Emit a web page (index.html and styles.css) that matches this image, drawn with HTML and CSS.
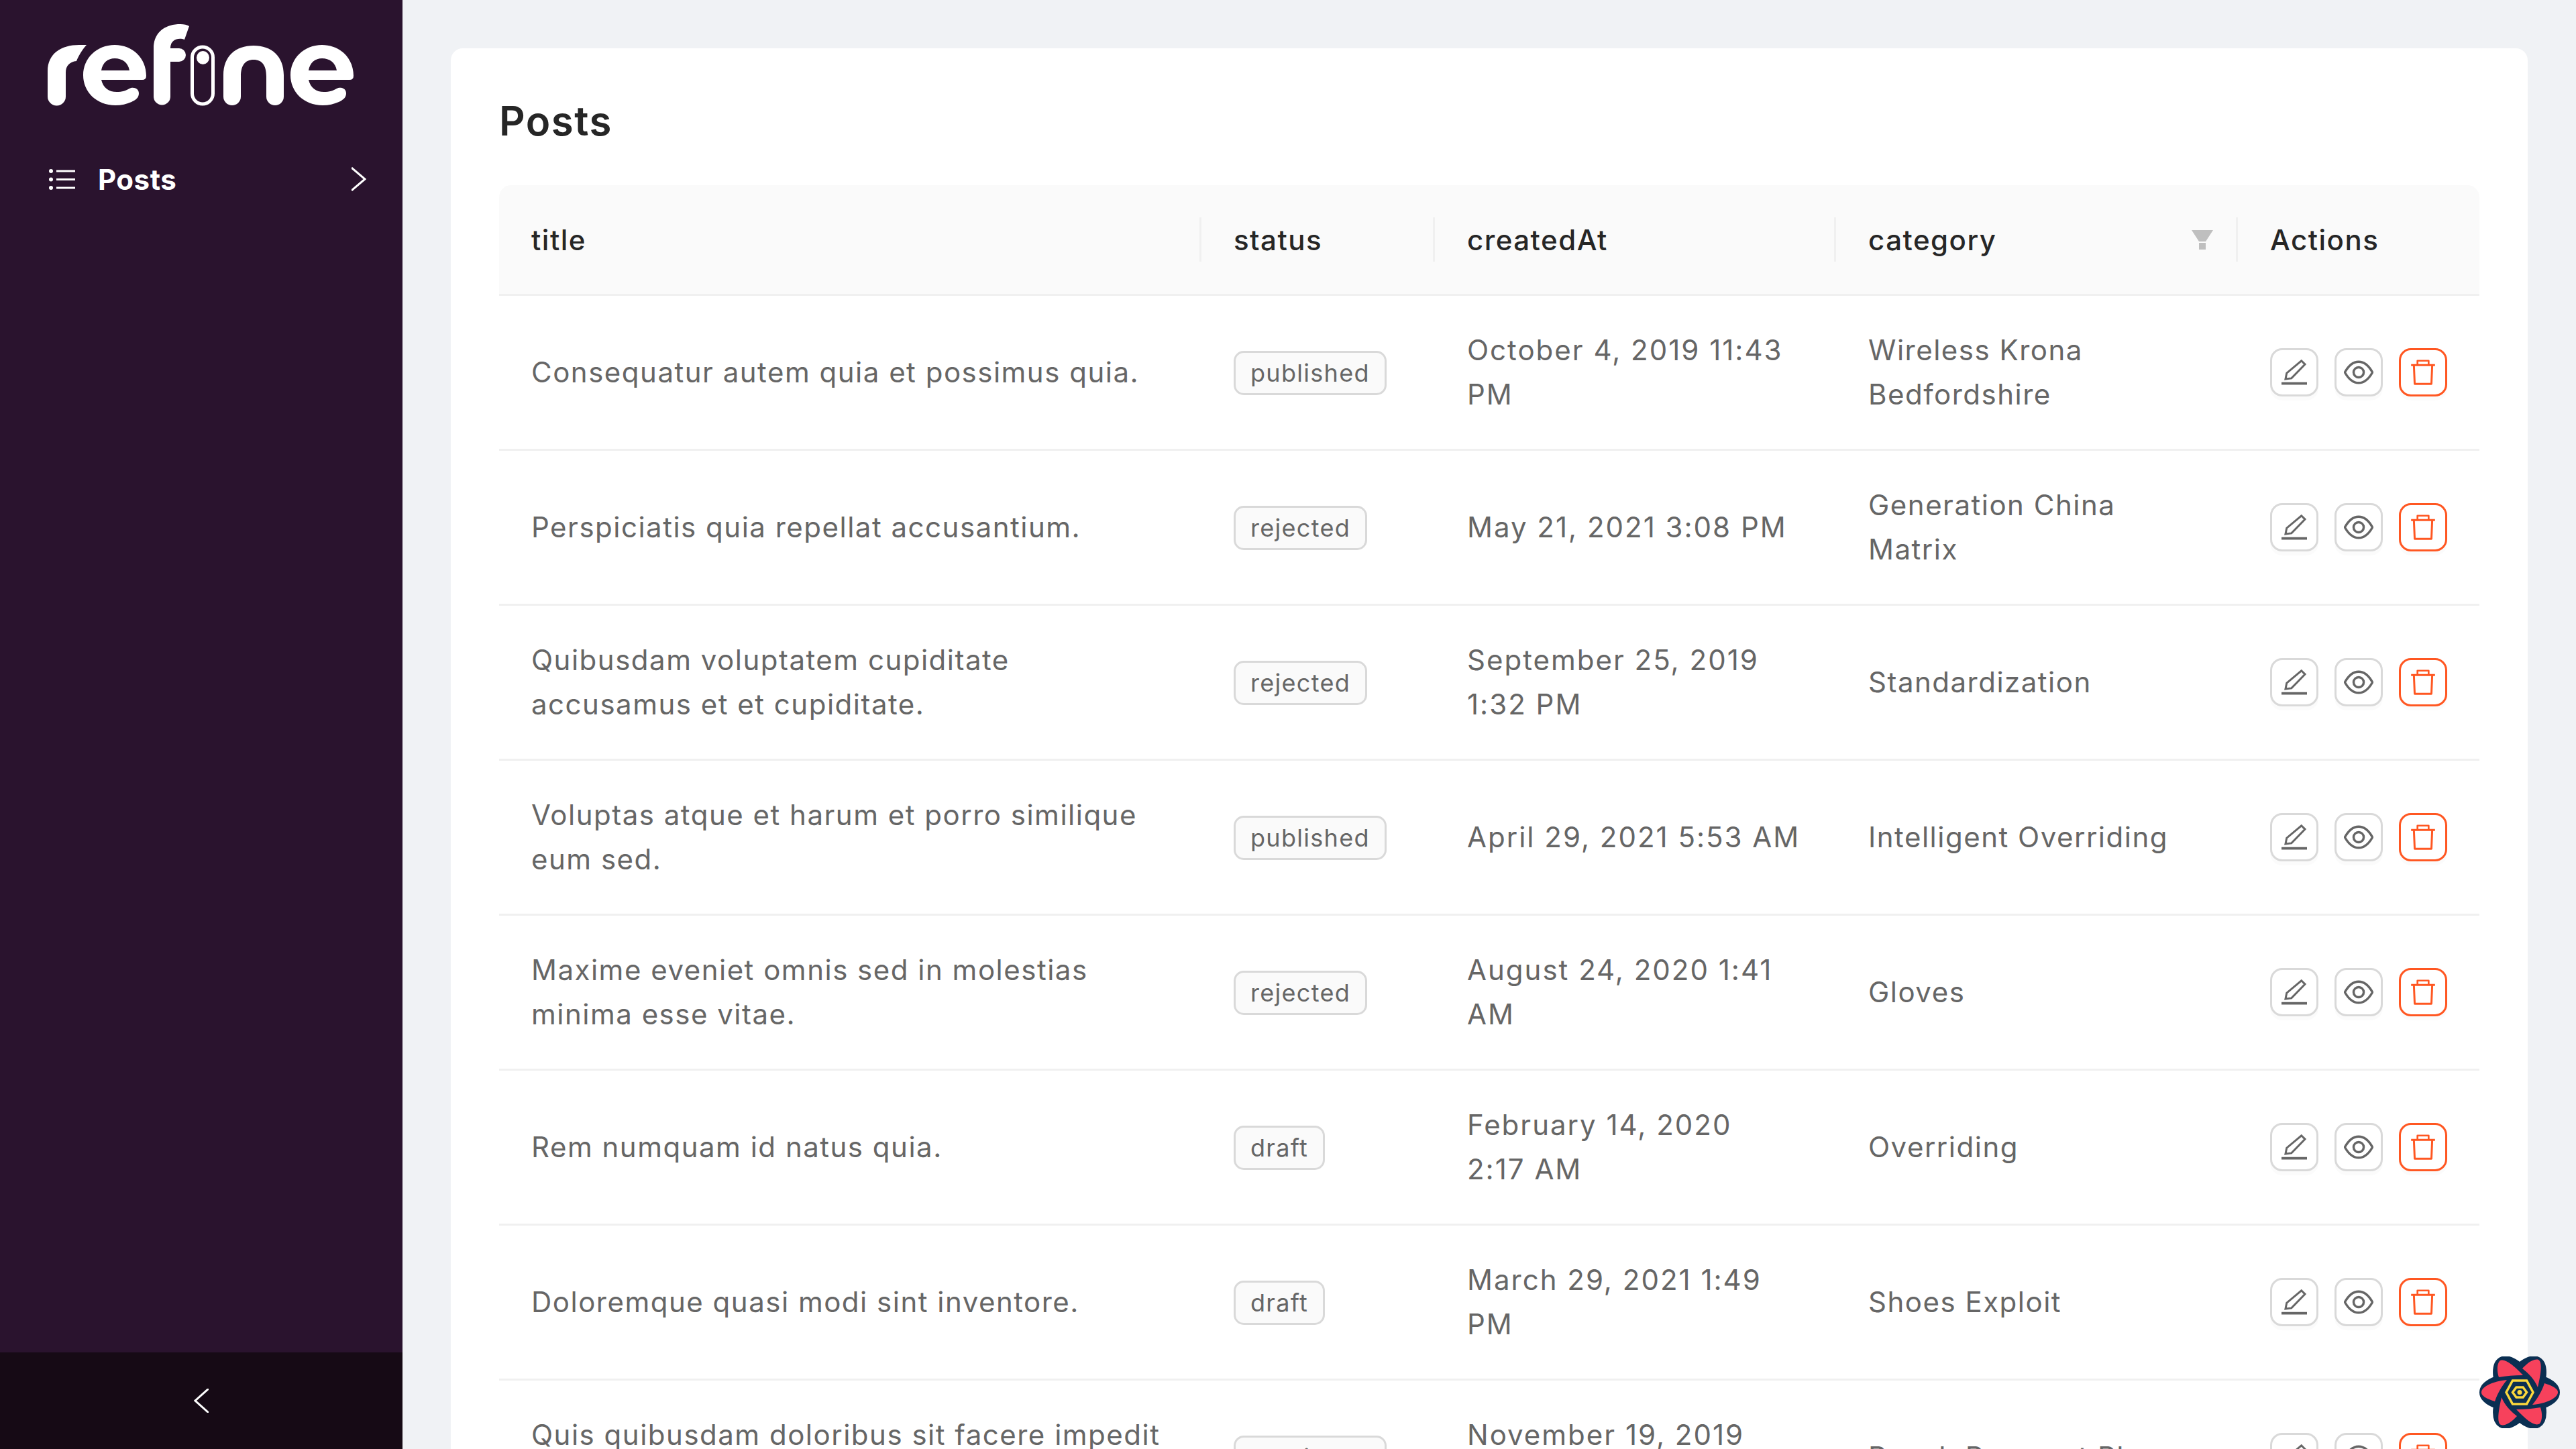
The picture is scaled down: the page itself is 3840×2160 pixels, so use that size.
FILE: index.html
```html
<!DOCTYPE html>
<html lang="en">
<head>
    <meta charset="UTF-8">
    <title>Posts</title>
    <link rel="stylesheet" href="styles.css">
</head>
<body>
    <svg class="icon-defs" width="0" height="0">
        <symbol id="i-edit" viewBox="0 0 64 64">
            <path d="M50 3 L59 12 L25 47 L10 49 L13 34 Z" fill="none" stroke="#666" stroke-width="5"/>
            <path d="M0 60 H64" fill="none" stroke="#666" stroke-width="6"/>
        </symbol>
        <symbol id="i-eye" viewBox="0 0 64 64">
            <path d="M2 32 C12 14 22 9 32 9 C42 9 52 14 62 32 C52 50 42 55 32 55 C22 55 12 50 2 32 Z" fill="none" stroke="#666" stroke-width="5"/>
            <circle cx="32" cy="32" r="11" fill="none" stroke="#666" stroke-width="5"/>
        </symbol>
        <symbol id="i-trash" viewBox="0 0 64 64">
            <path d="M2 14 H62" fill="none" stroke="#ff5722" stroke-width="5"/>
            <path d="M18 14 V3 H46 V14" fill="none" stroke="#ff5722" stroke-width="4.5" stroke-linejoin="round"/>
            <path d="M9 14 L11 61 H53 L55 14" fill="none" stroke="#ff5722" stroke-width="5" stroke-linejoin="round"/>
        </symbol>
        <symbol id="logo-e" viewBox="0 0 94 90">
            <path fill-rule="evenodd" d="M47 0 C74 0 94 20 94 46 Q94 52 88 52 H27 C30 64 38 70 50 70 C58 70 64 68 69 65 C74 62 83 64 83 72 C83 79 78 82 72 85 C65 88 57 90 48 90 C20 90 0 70 0 45 C0 20 20 0 47 0 Z M27 38 H69 C67 26 58 20 47 20 C37 20 29 26 27 38 Z" fill="#fff"/>
        </symbol>
    </svg>

    <div class="layout">
        <aside class="sider">
            <div class="sider-main">
                <div class="logo">
                    <svg viewBox="0 0 456 122" width="456" height="122">
                        <path d="M0 108 V70 C0 44 20 31 47 31 H58 C50 40 46 48 43 55 C33 56 27 62 27 72 V108 A13.5 13.5 0 0 1 0 108 Z" fill="#fff"/>
                        <use href="#logo-e" x="53" y="31" width="94" height="90"/>
                        <path d="M158 108 V36 C158 12 175 0 198 0 C203 0 208 1 211 3 L204 23 C196 20 183 22 183 36 H196 A10 10 0 0 1 196 56 H183 V108 A12.5 12.5 0 0 1 158 108 Z" fill="#fff"/>
                        <rect x="215.5" y="34" width="31" height="85" rx="15.5" fill="none" stroke="#fff" stroke-width="5"/>
                        <ellipse cx="231.5" cy="50" rx="9.5" ry="10" fill="#fff"/>
                        <path d="M262 108 V76 C262 48 280 32 307 32 C334 32 352 48 352 76 V108 A13 13 0 0 1 326 108 V78 C326 62 320 53 307 53 C294 53 288 62 288 78 V108 A13 13 0 0 1 262 108 Z" fill="#fff"/>
                        <use href="#logo-e" x="362" y="31" width="94" height="90"/>
                    </svg>
                </div>
                <div class="menu-item">
                    <svg class="menu-icon" viewBox="0 0 39 31" width="39" height="31">
                        <circle cx="3" cy="3" r="3" fill="#fff"/>
                        <circle cx="3" cy="15.5" r="3" fill="#fff"/>
                        <circle cx="3" cy="28" r="3" fill="#fff"/>
                        <path d="M11 3 H39 M11 15.5 H39 M11 28 H39" stroke="#fff" stroke-width="3"/>
                    </svg>
                    <span class="menu-label">Posts</span>
                    <svg class="menu-arrow" viewBox="0 0 22 36" width="22" height="36">
                        <path d="M0 1 L20 18 L0 35" fill="none" stroke="#fff" stroke-width="3"/>
                    </svg>
                </div>
            </div>
            <div class="sider-trigger">
                <svg viewBox="0 0 22 36" width="22" height="36">
                    <path d="M22 0 L2 18 L22 36" fill="none" stroke="#fff" stroke-width="3"/>
                </svg>
            </div>
        </aside>

        <main class="content">
            <div class="card">
                <h1 class="card-title">Posts</h1>
                <table class="posts-table">
                    <colgroup>
                        <col class="col-title">
                        <col class="col-status">
                        <col class="col-created">
                        <col class="col-category">
                        <col class="col-actions">
                    </colgroup>
                    <thead>
                        <tr>
                            <th>title</th>
                            <th>status</th>
                            <th>createdAt</th>
                            <th>
                                <div class="th-filter">
                                    <span>category</span>
                                    <svg viewBox="0 0 32 30" width="32" height="30">
                                        <path d="M0 1 H32 L21 18 H11 Z M11 20 H21 V30 H11 Z" fill="#bfbfbf"/>
                                    </svg>
                                </div>
                            </th>
                            <th>Actions</th>
                        </tr>
                    </thead>
                    <tbody id="rows"></tbody>
                </table>
            </div>
        </main>
    </div>

    <svg class="devtools" viewBox="0 0 120 107" width="120" height="107">
        <g fill="#0b2f52" stroke="#0b2f52" stroke-width="6">
            <ellipse cx="60" cy="53.5" rx="57" ry="27"/>
            <ellipse cx="60" cy="53.5" rx="57" ry="27" transform="rotate(60 60 53.5)"/>
            <ellipse cx="60" cy="53.5" rx="57" ry="27" transform="rotate(120 60 53.5)"/>
        </g>
        <g fill="#f7415c">
            <path d="M29 31 C26 22 26 12 30 7 C36 2 48 10 65 28 C52 28 40 29 29 31 Z"/>
            <path d="M64 18 C72 9 82 3 88 5 C94 8 92 25 87 46 C82 34 74 26 64 18 Z"/>
            <path d="M97 40 C110 44 118 49 117 54 C116 62 100 70 79 72 C87 62 93 52 97 40 Z"/>
            <path d="M91 76 C94 85 94 95 90 100 C84 105 72 97 55 79 C68 79 80 78 91 76 Z"/>
            <path d="M56 89 C48 98 38 104 32 102 C26 99 28 82 33 61 C38 73 46 81 56 89 Z"/>
            <path d="M23 67 C10 63 2 58 3 53 C4 45 20 37 41 35 C33 45 27 55 23 67 Z"/>
        </g>
        <path d="M49.5 36 H70.5 L80 53.5 L70.5 71 H49.5 L40 53.5 Z" fill="none" stroke="#fbd83c" stroke-width="3.5"/>
        <path d="M55 46 H65 L70.5 53.5 L65 61 H55 L49.5 53.5 Z" fill="none" stroke="#fbd83c" stroke-width="3.5"/>
        <circle cx="60" cy="53.5" r="3.5" fill="#fbd83c"/>
    </svg>

    <script>
        const posts = [
            ['Consequatur autem quia et possimus quia.', 'published', 'October 4, 2019 11:43 PM', 'Wireless Krona Bedfordshire'],
            ['Perspiciatis quia repellat accusantium.', 'rejected', 'May 21, 2021 3:08 PM', 'Generation China Matrix'],
            ['Quibusdam voluptatem cupiditate accusamus et et cupiditate.', 'rejected', 'September 25, 2019 1:32 PM', 'Standardization'],
            ['Voluptas atque et harum et porro similique eum sed.', 'published', 'April 29, 2021 5:53 AM', 'Intelligent Overriding'],
            ['Maxime eveniet omnis sed in molestias minima esse vitae.', 'rejected', 'August 24, 2020 1:41 AM', 'Gloves'],
            ['Rem numquam id natus quia.', 'draft', 'February 14, 2020<br>2:17 AM', 'Overriding'],
            ['Doloremque quasi modi sint inventore.', 'draft', 'March 29, 2021 1:49 PM', 'Shoes Exploit'],
            ['Quis quibusdam doloribus sit facere impedit et.', 'published', 'November 19, 2019 4:02 PM', 'Ranch Payment Plan']
        ];

        // Build table rows
        const rows = document.getElementById('rows');
        posts.forEach(post => {
            const tr = document.createElement('tr');
            tr.innerHTML = `
                <td>${post[0]}</td>
                <td><span class="tag">${post[1]}</span></td>
                <td class="date-cell">${post[2]}</td>
                <td>${post[3]}</td>
                <td>
                    <div class="actions">
                        <button class="action-btn"><svg width="38" height="38"><use href="#i-edit"/></svg></button>
                        <button class="action-btn"><svg width="44" height="44"><use href="#i-eye"/></svg></button>
                        <button class="action-btn danger"><svg width="38" height="38"><use href="#i-trash"/></svg></button>
                    </div>
                </td>`;
            rows.appendChild(tr);
        });
    </script>
</body>
</html>
```
FILE: styles.css
```css
* {
    margin: 0;
    padding: 0;
    box-sizing: border-box;
}

html, body {
    height: 100%;
    overflow: hidden;
}

body {
    font-family: 'Inter', 'Open Sans', sans-serif;
    background: #f0f2f5;
    font-size: 42px;
    letter-spacing: 1.5px;
    color: #262626;
}

.icon-defs {
    position: absolute;
}

.layout {
    display: flex;
    height: 2160px;
}

.sider {
    width: 600px;
    flex-shrink: 0;
    background: #2a132e;
    display: flex;
    flex-direction: column;
}

.sider-main {
    flex: 1;
}

.logo {
    padding: 36px 0 0 71px;
    height: 237px;
}

.menu-item {
    display: flex;
    align-items: center;
    height: 60px;
    padding: 0 54px 0 73px;
    color: white;
}

.menu-label {
    flex: 1;
    margin-left: 34px;
    font-weight: 700;
    letter-spacing: 0.5px;
}

.sider-trigger {
    height: 144px;
    background: #160a15;
    display: flex;
    align-items: center;
    justify-content: center;
}

.content {
    flex: 1;
    padding: 72px;
    min-width: 0;
}

.card {
    background: white;
    border-radius: 18px;
    padding: 72px;
    height: 2400px;
}

.card-title {
    font-size: 60px;
    font-weight: 600;
    line-height: 72px;
    margin-bottom: 60px;
    color: #262626;
}

.posts-table {
    width: 100%;
    border-collapse: separate;
    border-spacing: 0;
    table-layout: fixed;
}

.col-title { width: 1047px; }
.col-status { width: 348px; }
.col-created { width: 598px; }
.col-category { width: 599px; }
.col-actions { width: 360px; }

.posts-table th {
    position: relative;
    height: 165px;
    padding: 0 48px;
    background: #fafafa;
    border-bottom: 3px solid #f0f0f0;
    text-align: left;
    font-weight: 500;
    color: #262626;
}

.posts-table th:first-child {
    border-top-left-radius: 18px;
}

.posts-table th:last-child {
    border-top-right-radius: 18px;
}

/* little divider between header cells */
.posts-table th:not(:last-child)::after {
    content: '';
    position: absolute;
    right: 0;
    top: 50%;
    width: 3px;
    height: 66px;
    margin-top: -33px;
    background: #f0f0f0;
}

.th-filter {
    display: flex;
    align-items: center;
    justify-content: space-between;
    margin-right: -11px;
}

.posts-table td {
    height: 231px;
    padding: 0 48px;
    border-bottom: 3px solid #f0f0f0;
    color: #666;
    line-height: 66px;
}

.posts-table td.date-cell {
    letter-spacing: 2px;
}

.tag {
    display: inline-block;
    height: 66px;
    line-height: 60px;
    padding: 0 22px;
    background: #fafafa;
    border: 3px solid #d9d9d9;
    border-radius: 15px;
    font-size: 36px;
    letter-spacing: 1.3px;
    color: #666;
}

.actions {
    display: flex;
    gap: 24px;
}

.action-btn {
    width: 72px;
    height: 72px;
    background: white;
    border: 3px solid #d9d9d9;
    border-radius: 18px;
    box-shadow: 0 6px 0 rgba(0, 0, 0, 0.015);
    display: flex;
    align-items: center;
    justify-content: center;
}

.action-btn.danger {
    border-color: #ff5722;
}

.devtools {
    position: absolute;
    left: 3696px;
    top: 2022px;
}
```
